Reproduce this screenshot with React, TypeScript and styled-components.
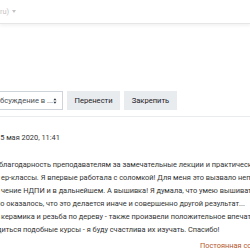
import * as React from 'react';
import styled, { createGlobalStyle } from 'styled-components';

const Global = createGlobalStyle`
  html, body {
    margin: 0;
    padding: 0;
    background: #fff;
  }
  body {
    width: 250px;
    height: 250px;
    overflow: hidden;
    font-family: Roboto, 'Open Sans', sans-serif;
    font-size: 7.4px;
    color: #1d2125;
  }
`;

const Page = styled.div`
  width: 250px;
  height: 250px;
  overflow: hidden;
  display: flex;
  flex-direction: column;
`;

const Navbar = styled.div`
  height: 23px;
  flex: none;
  display: flex;
  align-items: center;
  border-bottom: 1px solid #e6e6e6;
  box-shadow: 0 2px 3px rgba(0, 0, 0, 0.05);
  color: #c4c4c4;
  white-space: nowrap;
`;

const Caret = styled.span`
  display: inline-block;
  margin-left: 3px;
  border-left: 2.5px solid transparent;
  border-right: 2.5px solid transparent;
  border-top: 3px solid #c4c4c4;
  vertical-align: middle;
`;

const Toolbar = styled.div`
  margin-top: 67px;
  display: flex;
  align-items: stretch;
  gap: 4px;
  height: 21px;
  font-size: 7.6px;
`;

const Select = styled.div`
  width: 63px;
  flex: none;
  box-sizing: border-box;
  border: 1px solid #ced4da;
  border-left: none;
  display: flex;
  align-items: center;
  justify-content: space-between;
  padding-right: 5px;
  white-space: nowrap;
  overflow: hidden;
  color: #495057;
`;

const Button = styled.div`
  display: flex;
  align-items: center;
  padding: 0 7.5px;
  background: #e9ecef;
  color: #1d2125;
  white-space: nowrap;
`;

const Divider = styled.div`
  margin-top: 6px;
  border-top: 1px solid #e9ecef;
`;

const Date = styled.div`
  margin-top: 15px;
  line-height: 12px;
  color: #333;
  white-space: nowrap;
  text-indent: -4px;
`;

const Body = styled.div`
  margin-top: 14px;
  line-height: 13px;
  color: #333;
`;

const Line = styled.div<{ $indent: number }>`
  white-space: nowrap;
  text-indent: ${p => p.$indent}px;
`;

const Permalink = styled.div`
  margin-top: 5px;
  padding-left: 200px;
  white-space: nowrap;
  color: #b4582d;
`;

const SortArrows = () => (
  <svg width="5" height="8" viewBox="0 0 5 8">
    <path d="M2.5 0.5 L4.5 3 L0.5 3 Z M2.5 7.5 L4.5 5 L0.5 5 Z" fill="#343a40" />
  </svg>
);

const lines: [number, string][] = [
  [-1, 'благодарность преподавателям за замечательные лекции и практические'],
  [1, 'ер-классы. Я впервые работала с соломкой! Для меня это вызвало непередаваемые'],
  [1, 'чение НДПИ и в дальнейшем. А вышивка! Я думала, что умею вышивать'],
  [-5, 'Но оказалось, что это делается иначе и совершенно другой результат...'],
  [1, ' керамика и резьба по дереву - также произвели положительное впечатление'],
  [-3, 'диться подобные курсы - я буду счастлива их изучать. Спасибо!'],
];

export default function App() {
  return (
    <Page>
      <Global />
      <Navbar>
        ru)<Caret />
      </Navbar>
      <Toolbar>
        <Select>
          бсуждение в ...
          <SortArrows />
        </Select>
        <Button>Перенести</Button>
        <Button>Закрепить</Button>
      </Toolbar>
      <Divider />
      <Date>15 мая 2020, 11:41</Date>
      <Body>
        {lines.map(([indent, text], i) => (
          <Line key={i} $indent={indent}>{text}</Line>
        ))}
      </Body>
      <Permalink>Постоянная ссылка</Permalink>
    </Page>
  );
}
